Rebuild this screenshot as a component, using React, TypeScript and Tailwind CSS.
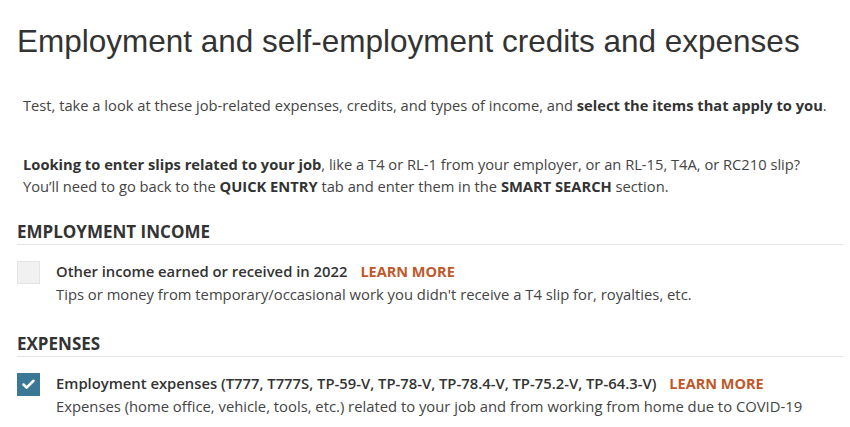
import { Check } from 'lucide-react';

const body = { fontFamily: '"Open Sans", sans-serif' };

function Item({
  checked,
  title,
  desc,
}: {
  checked: boolean;
  title: string;
  desc: string;
}) {
  return (
    <div className="flex items-start gap-4 pt-[15px]">
      {checked ? (
        <div className="w-[23px] h-[23px] mt-[1px] bg-[#3b7896] flex items-center justify-center shrink-0">
          <Check className="w-[15px] h-[15px] text-white" strokeWidth={4} />
        </div>
      ) : (
        <div className="w-[23px] h-[23px] mt-[1px] bg-[#f1f1f1] border border-[#e4e4e4] shrink-0" />
      )}
      <div className="text-[14.8px] leading-[22px] text-[#444]">
        <div>
          <span className="font-semibold text-[#333]">{title}</span>
          <span className="ml-[13px] font-bold text-[#c0582a] text-[14.5px]">LEARN MORE</span>
        </div>
        <div>{desc}</div>
      </div>
    </div>
  );
}

export default function App() {
  return (
    <div className="w-[850px] h-[427px] bg-white pl-[17px] pr-[7px] overflow-hidden" style={body}>
      <h1
        className="pt-[22px] text-[31.5px] leading-[38px] text-[#333]"
        style={{ fontFamily: '"Liberation Sans", Arial, sans-serif' }}
      >
        Employment and self-employment credits and expenses
      </h1>

      <p className="mt-[34px] pl-[6px] text-[14.7px] leading-[22px] text-[#444]">
        Test, take a look at these job-related expenses, credits, and types of income, and{' '}
        <b className="text-[#333]">select the items that apply to you</b>.
      </p>

      <p className="mt-[37px] pl-[6px] text-[14.7px] leading-[22px] text-[#444]">
        <b className="text-[#333]">Looking to enter slips related to your job</b>, like a T4 or RL-1 from
        your employer, or an RL-15, T4A, or RC210 slip?
        <br />
        You’ll need to go back to the <b className="text-[#333]">QUICK ENTRY</b> tab and enter them in the{' '}
        <b className="text-[#333]">SMART SEARCH</b> section.
      </p>

      <div className="mt-[23px]">
        <h2 className="text-[17px] leading-[23px] font-bold text-[#333] pb-[1px] border-b border-[#e3e3e3]">
          EMPLOYMENT INCOME
        </h2>
        <Item
          checked={false}
          title="Other income earned or received in 2022"
          desc="Tips or money from temporary/occasional work you didn't receive a T4 slip for, royalties, etc."
        />
      </div>

      <div className="mt-[27px]">
        <h2 className="text-[17px] leading-[23px] font-bold text-[#333] pb-[1px] border-b border-[#e3e3e3]">
          EXPENSES
        </h2>
        <Item
          checked={true}
          title="Employment expenses (T777, T777S, TP-59-V, TP-78-V, TP-78.4-V, TP-75.2-V, TP-64.3-V)"
          desc="Expenses (home office, vehicle, tools, etc.) related to your job and from working from home due to COVID-19"
        />
      </div>
    </div>
  );
}
